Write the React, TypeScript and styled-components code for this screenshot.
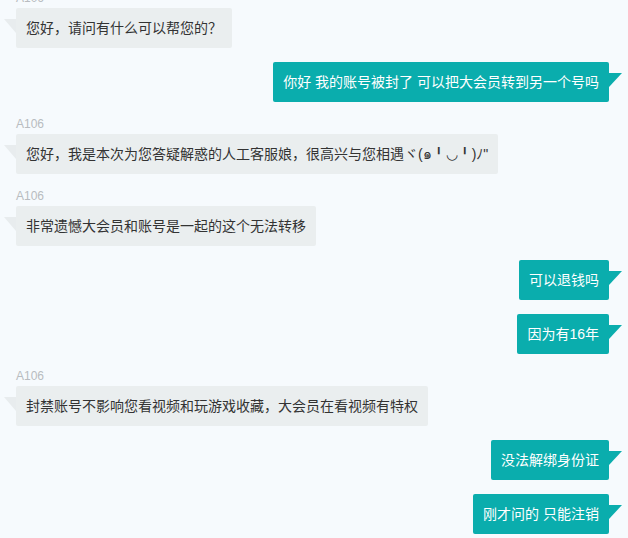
import React from "react";
import styled, { createGlobalStyle } from "styled-components";

const Global = createGlobalStyle`
  html, body { margin: 0; padding: 0; background: #f6fafd; }
  body { font-family: "Liberation Sans", "Noto Sans CJK SC", sans-serif; }
`;

const Viewport = styled.div`
  width: 628px;
  height: 538px;
  overflow: hidden;
  background: #f6fafd;
`;

const List = styled.div`
  display: flex;
  flex-direction: column;
  margin-top: -10px;
  padding: 0 19px 0 16px;
`;

const Item = styled.div<{ $mine?: boolean }>`
  display: flex;
  flex-direction: column;
  align-items: ${(p) => (p.$mine ? "flex-end" : "flex-start")};
  margin-bottom: 14px;
`;

const Name = styled.div`
  font-size: 12px;
  line-height: 16px;
  color: #b8bcc0;
  margin-bottom: 2px;
`;

const Bubble = styled.div<{ $mine?: boolean }>`
  position: relative;
  padding: 10px;
  font-size: 14px;
  line-height: 20px;
  border-radius: 2px;
  white-space: pre;
  color: ${(p) => (p.$mine ? "#ffffff" : "#333333")};
  background: ${(p) => (p.$mine ? "#0aadad" : "#eaeeef")};

  &::after {
    content: "";
    position: absolute;
    top: 11px;
    width: 0;
    height: 0;
    border-top: 14px solid ${(p) => (p.$mine ? "#0aadad" : "#e8ecee")};
    ${(p) =>
      p.$mine
        ? "right: -13px; border-right: 13px solid transparent;"
        : "left: -12px; border-left: 12px solid transparent;"}
  }
`;

type Msg = { mine?: boolean; name?: string; text: string };

const messages: Msg[] = [
  { name: "A106", text: "您好，请问有什么可以帮您的？" },
  { mine: true, text: "你好 我的账号被封了 可以把大会员转到另一个号吗" },
  {
    name: "A106",
    text: "您好，我是本次为您答疑解惑的人工客服娘，很高兴与您相遇ヾ(๑╹◡╹)ﾉ\"",
  },
  { name: "A106", text: "非常遗憾大会员和账号是一起的这个无法转移" },
  { mine: true, text: "可以退钱吗" },
  { mine: true, text: "因为有16年" },
  { name: "A106", text: "封禁账号不影响您看视频和玩游戏收藏，大会员在看视频有特权" },
  { mine: true, text: "没法解绑身份证" },
  { mine: true, text: "刚才问的 只能注销" },
];

export default function App() {
  return (
    <>
      <Global />
      <Viewport>
        <List>
          {messages.map((m, i) => (
            <Item key={i} $mine={m.mine}>
              {m.name && <Name>{m.name}</Name>}
              <Bubble $mine={m.mine}>{m.text}</Bubble>
            </Item>
          ))}
        </List>
      </Viewport>
    </>
  );
}
